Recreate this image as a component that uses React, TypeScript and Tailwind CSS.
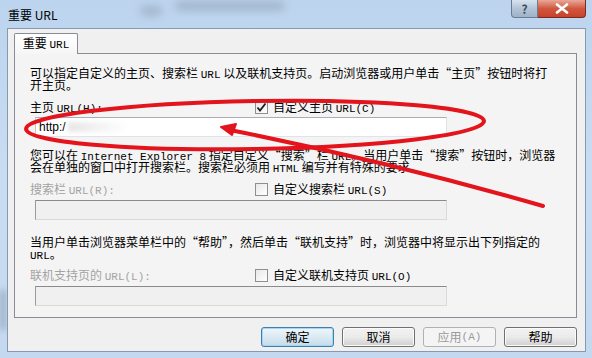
import React from "react";

// Latin runs in the dialog use a narrow fixed-width face, like SimSun's half-width glyphs
const L = ({ children }: { children: React.ReactNode }) => (
  <span className="font-['Liberation_Mono',monospace] text-[11px] leading-[12px]">{children}</span>
);

function Checkbox({ checked = false }: { checked?: boolean }) {
  return (
    <div className="w-[13px] h-[13px] border border-[#8e8f8f] bg-gradient-to-br from-[#e8e8e8] to-white flex items-center justify-center shrink-0">
      {checked && (
        <svg width="11" height="11" viewBox="0 0 11 11">
          <path d="M1.5 5.5 L4 8.5 L9.5 1.5" fill="none" stroke="#1c1c1c" strokeWidth="1.8" />
        </svg>
      )}
    </div>
  );
}

function OptionRow({
  label,
  check,
  checked,
  disabled,
  className = "",
}: {
  label: React.ReactNode;
  check: React.ReactNode;
  checked?: boolean;
  disabled?: boolean;
  className?: string;
}) {
  return (
    <div className={`flex items-center h-[13px] ${className}`}>
      <div className={`w-[225px] whitespace-nowrap ${disabled ? "text-[#a3a3a3]" : "text-black"}`}>{label}</div>
      <Checkbox checked={checked} />
      <div className="ml-[5px] whitespace-nowrap">{check}</div>
    </div>
  );
}

function TextBox({ disabled, children, className = "" }: { disabled?: boolean; children?: React.ReactNode; className?: string }) {
  return (
    <div
      className={`ml-[5px] w-[412px] h-[20px] border flex items-center px-[3px] ${
        disabled
          ? "bg-[#f0f0f0] border-[#d9d9d9] border-t-[#8a8a8a] border-l-[#9a9a9a]"
          : "bg-white border-[#dfe3ea] border-t-[#abadb3] border-l-[#c4c7cd]"
      } ${className}`}
    >
      {children}
    </div>
  );
}

function DlgButton({ children, primary, disabled }: { children: React.ReactNode; primary?: boolean; disabled?: boolean }) {
  const look = disabled
    ? "border-[#adb2b5] bg-[#f4f4f4] text-[#9a9a9a]"
    : primary
    ? "border-[#3c7fb1] bg-gradient-to-b from-[#eef6fb] via-[#dceaf3] to-[#c4dbea] text-black shadow-[inset_0_0_0_1px_#a6d6f0]"
    : "border-[#707070] bg-gradient-to-b from-[#f2f2f2] via-[#ebebeb] to-[#cfcfcf] text-black shadow-[inset_0_0_0_1px_#fbfbfb]";
  return (
    <div className={`w-[73px] h-[20px] rounded-[3px] border flex items-center justify-center text-[12px] ${look}`}>
      {children}
    </div>
  );
}

export default function App() {
  return (
    <div className="relative w-[592px] h-[358px] overflow-hidden bg-gradient-to-b from-[#bcd4ee] via-[#c9ddf2] to-[#c4d9ef] font-['Noto_Sans_CJK_SC',sans-serif] text-[12px] leading-[12px] text-black">
      {/* blurred desktop showing through the glass */}
      <div className="absolute left-[140px] top-[6px] w-[22px] h-[10px] rounded-full bg-[#8a98a8] opacity-50 blur-[4px]" />
      <div className="absolute left-[175px] top-[2px] w-[110px] h-[8px] rounded-full bg-[#6f7d8c] opacity-40 blur-[4px]" />
      <div className="absolute left-[0px] top-[290px] w-[6px] h-[40px] bg-[#5e6f84] opacity-40 blur-[3px]" />

      {/* title bar */}
      <div className="relative h-[28px] flex items-start justify-between">
        <div className="pl-[8px] pt-[8px] text-[12px] leading-[14px]">重要 URL</div>
        <div className="flex pr-[6px]">
          <div className="w-[27px] h-[18px] rounded-bl-[4px] border border-t-0 border-[#6b7c92] bg-gradient-to-b from-[#d8e3ee] via-[#b3c4d6] to-[#9fb2c7] flex items-center justify-center text-[12px] text-[#3f4d5e] font-bold">
            ?
          </div>
          <div className="w-[48px] h-[18px] rounded-br-[4px] border border-t-0 border-l-0 border-[#7a2a1e] bg-gradient-to-b from-[#e9a798] via-[#d0573e] to-[#c8412a] flex items-center justify-center">
            <svg width="14" height="11" viewBox="0 0 14 11">
              <path d="M2 1.5 L12 9.5 M12 1.5 L2 9.5" stroke="#ffffff" strokeWidth="2.6" strokeLinecap="round" />
            </svg>
          </div>
        </div>
      </div>

      {/* client area */}
      <div className="relative ml-[7px] mr-[6px] h-[324px] bg-[#f0f0f0] border border-[#8799b0] pl-[6px] pr-[8px] flex flex-col">
        {/* tab header */}
        <div className="mt-[4px] flex">
          <div className="relative z-10 -mb-px w-[64px] h-[21px] border border-b-0 border-[#898c95] rounded-t-[2px] bg-gradient-to-b from-white to-[#f6f6f6] flex items-center justify-center">
            <span>
              重要 <L>URL</L>
            </span>
          </div>
        </div>

        {/* tab page */}
        <div className="h-[265px] border border-[#898c95] bg-[#f4f4f4] pl-[15px] pt-[13px] flex flex-col">
          <div className="whitespace-nowrap">
            <div className="h-[12px]">
              可以指定自定义的主页、搜索栏 <L>URL</L> 以及联机支持页。启动浏览器或用户单击“主页”按钮时将打
            </div>
            <div className="h-[12px]">开主页。</div>
          </div>

          <OptionRow
            className="mt-[10px]"
            label={
              <>
                主页 <L>URL(H):</L>
              </>
            }
            checked
            check={
              <>
                自定义主页 <L>URL(C)</L>
              </>
            }
          />
          <TextBox className="mt-[3px]">
            <span className="font-['Liberation_Sans',sans-serif] text-[12px]">http:/</span>
            <span className="ml-[2px] w-[60px] h-[10px] bg-gradient-to-r from-[#e6e6e6] to-white blur-[2px]" />
          </TextBox>

          <div className="mt-[12px] whitespace-nowrap">
            <div className="h-[12px]">
              您可以在 <L>Internet Explorer 8</L> 指定自定义“搜索”栏 <L>URL</L>。当用户单击“搜索”按钮时，浏览器
            </div>
            <div className="h-[12px]">
              会在单独的窗口中打开搜索栏。搜索栏必须用 <L>HTML</L> 编写并有特殊的要求。
            </div>
          </div>

          <OptionRow
            className="mt-[10px]"
            disabled
            label={
              <>
                搜索栏 <L>URL(R):</L>
              </>
            }
            check={
              <>
                自定义搜索栏 <L>URL(S)</L>
              </>
            }
          />
          <TextBox disabled className="mt-[4px]" />

          <div className="mt-[16px] whitespace-nowrap">
            <div className="h-[12px]">当用户单击浏览器菜单栏中的“帮助”，然后单击“联机支持”时，浏览器中将显示出下列指定的</div>
            <div className="h-[12px]">
              <L>URL</L>。
            </div>
          </div>

          <OptionRow
            className="mt-[9px]"
            disabled
            label={
              <>
                联机支持页的 <L>URL(L):</L>
              </>
            }
            check={
              <>
                自定义联机支持页 <L>URL(O)</L>
              </>
            }
          />
          <TextBox disabled className="mt-[4px]" />
        </div>

        {/* dialog buttons */}
        <div className="mt-[9px] flex justify-end gap-[8px]">
          <DlgButton primary>确定</DlgButton>
          <DlgButton>取消</DlgButton>
          <DlgButton disabled>
            应用 <L>(A)</L>
          </DlgButton>
          <DlgButton>帮助</DlgButton>
        </div>
      </div>

      {/* red hand-drawn annotation */}
      <svg className="absolute left-0 top-0 pointer-events-none" width="592" height="358" viewBox="0 0 592 358">
        <ellipse cx="255" cy="125" rx="229" ry="24" transform="rotate(-1 255 125)" fill="none" stroke="#e3141c" strokeWidth="4" />
        <path d="M543 206 Q 390 162 230 130" fill="none" stroke="#e3141c" strokeWidth="4" strokeLinecap="round" />
        <path d="M221 127 L236 124 L232 135 Z" fill="#e3141c" stroke="#e3141c" strokeWidth="2" strokeLinejoin="round" />
      </svg>
    </div>
  );
}
